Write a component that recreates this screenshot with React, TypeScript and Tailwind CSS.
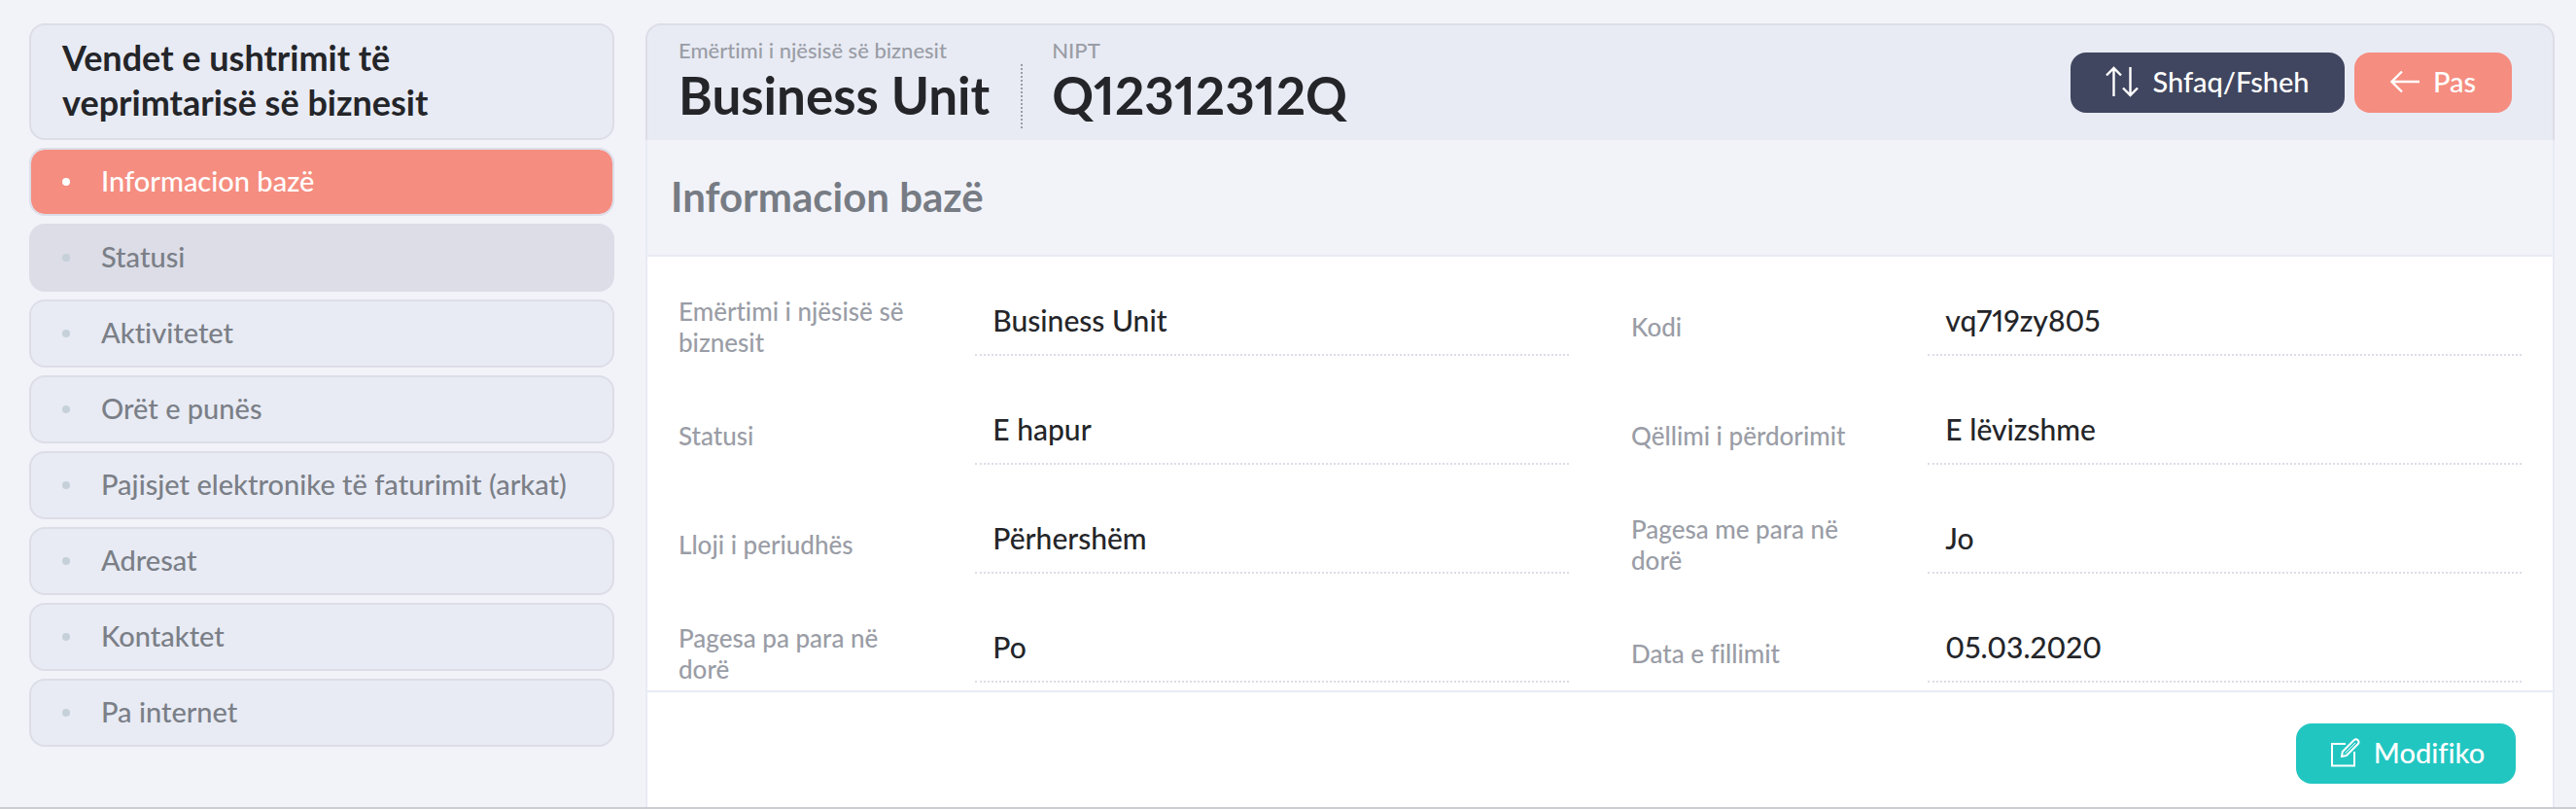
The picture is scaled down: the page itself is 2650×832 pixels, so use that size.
import React from 'react';
import clsx from 'clsx';

interface Field {
    id: string;
    label: string;
    value: string;
}

const menuItems = [
    'Informacion bazë',
    'Statusi',
    'Aktivitetet',
    'Orët e punës',
    'Pajisjet elektronike të faturimit (arkat)',
    'Adresat',
    'Kontaktet',
    'Pa internet',
];

const fields: Field[] = [
    { id: 'name', label: 'Emërtimi i njësisë së biznesit', value: 'Business Unit' },
    { id: 'code', label: 'Kodi', value: 'vq719zy805' },
    { id: 'status', label: 'Statusi', value: 'E hapur' },
    { id: 'purpose', label: 'Qëllimi i përdorimit', value: 'E lëvizshme' },
    { id: 'period', label: 'Lloji i periudhës', value: 'Përhershëm' },
    { id: 'cash', label: 'Pagesa me para në dorë', value: 'Jo' },
    { id: 'noncash', label: 'Pagesa pa para në dorë', value: 'Po' },
    { id: 'start', label: 'Data e fillimit', value: '05.03.2020' },
];

const SortIcon = () => (
    <svg width="34" height="32" viewBox="0 0 34 32" fill="none" stroke="currentColor" strokeWidth="2.4" aria-hidden="true">
        <path d="M8.5 31V2M1 9.5L8.5 2L16 9.5" />
        <path d="M25.5 1V30M18 22.5L25.5 30L33 22.5" />
    </svg>
);

const BackIcon = () => (
    <svg width="30" height="24" viewBox="0 0 30 24" fill="none" stroke="currentColor" strokeWidth="2.4" aria-hidden="true">
        <path d="M30 12H2M12 1.5L1.5 12L12 22.5" />
    </svg>
);

const EditIcon = () => (
    <svg width="30" height="30" viewBox="0 0 30 30" fill="none" stroke="currentColor" strokeWidth="2" aria-hidden="true">
        <path d="M15 6H1V28.5H24V14" />
        <path d="M11 19L11.8 14L23.8 2Q25.8 .4 27.6 2.2Q29.4 4.2 27.8 6L15.8 18L11 19Z" />
        <path d="M14.5 15.5L25 5" strokeWidth="1" />
    </svg>
);

const Sidebar: React.FC = () => (
    <aside className="w-[602px] shrink-0">
        <h2 className="rounded-2xl border-2 border-[#dcdde7] bg-[#e8ebf4] pt-[10px] pr-16 pb-[14px] pl-8 text-[36px] leading-[46px] font-bold text-[#242529]">
            Vendet e ushtrimit të veprimtarisë së biznesit
        </h2>
        <nav className="mt-2 flex flex-col gap-2">
            {menuItems.map((item, i) => (
                <a
                    key={item}
                    href="#"
                    className={clsx(
                        'flex h-[70px] items-center gap-8 rounded-2xl border-2 border-[#dcdde7] px-8 text-[29px] font-medium whitespace-nowrap',
                        i === 0 && 'bg-[#f58d80] bg-clip-padding text-white',
                        i === 1 && 'bg-[#dcdde7] text-[#7b7f87]',
                        i > 1 && 'bg-[#e8ebf4] text-[#7b7f87]'
                    )}
                >
                    <span className={clsx('size-2 shrink-0 rounded-full', i === 0 ? 'bg-white' : 'bg-[#c6d0d8]')} />
                    <span className="pb-[2px]">{item}</span>
                </a>
            ))}
        </nav>
    </aside>
);

const App: React.FC = () => (
    <div className="flex h-screen gap-8 border-b-2 border-[#cccdd0] bg-[#f2f3f9] pt-6 pr-[22px] pl-[30px] font-[Lato,sans-serif] proportional-nums [font-variant-ligatures:none]">
        <Sidebar />
        <main className="flex min-w-0 flex-1 flex-col">
            <header className="flex h-[120px] shrink-0 items-start justify-between rounded-t-2xl border-2 border-b-0 border-[#dcdde7] bg-[#e8ebf4] pr-[42px] pl-8">
                <div className="flex pt-[10px]">
                    <div className="pr-8">
                        <p className="text-[22px] leading-8 font-medium text-[#9a9da6]">Emërtimi i njësisë së biznesit</p>
                        <p className="text-[53px] leading-[60px] font-bold text-[#242529]">Business Unit</p>
                    </div>
                    <div className="mt-[30px] h-[66px] border-l-2 border-dotted border-[#9a9da6]" />
                    <div className="pl-[30px]">
                        <p className="text-[22px] leading-8 font-medium text-[#9a9da6]">NIPT</p>
                        <p className="text-[53px] leading-[60px] font-bold text-[#242529]">Q12312312Q</p>
                    </div>
                </div>
                <div className="flex gap-[10px] pt-7">
                    <button type="button" className="flex h-[62px] w-[282px] items-center justify-center gap-[14px] rounded-2xl bg-[#40465f] pb-[2px] text-[29px] font-medium text-white">
                        <SortIcon />
                        Shfaq/Fsheh
                    </button>
                    <button type="button" className="flex h-[62px] w-[162px] items-center justify-center gap-[14px] rounded-2xl bg-[#f58d80] pb-[2px] text-[29px] font-medium text-white">
                        <BackIcon />
                        Pas
                    </button>
                </div>
            </header>
            <section className="flex min-h-0 flex-1 flex-col border-x-2 border-[#e8ebf4]">
                <h1 className="flex h-[120px] shrink-0 items-center border-b-2 border-[#e8ebf4] px-6 pb-[2px] text-[42px] font-bold text-[#777c84]">
                    Informacion bazë
                </h1>
                <form className="grid min-h-0 flex-1 auto-rows-[64px] grid-cols-2 gap-x-16 gap-y-12 overflow-hidden bg-white px-8 pt-[42px]">
                    {fields.map((field) => (
                        <div key={field.id} className="flex items-center">
                            <label htmlFor={field.id} className="w-1/3 pr-14 pb-1 text-[26px] leading-8 font-medium text-[#9a9da6]">
                                {field.label}
                            </label>
                            <input
                                id={field.id}
                                readOnly
                                defaultValue={field.value}
                                className="h-[56px] w-2/3 border-b-2 border-dotted border-[#dcdde7] px-[18px] pb-4 text-[30px] font-medium text-[#242529] outline-none"
                            />
                        </div>
                    ))}
                </form>
                <footer className="flex h-[120px] shrink-0 items-start justify-end border-t-2 border-[#e8ebf4] bg-white pt-8 pr-[38px]">
                    <button type="button" className="flex h-[62px] w-[226px] items-center justify-center gap-[14px] rounded-2xl bg-[#22c6c1] pb-[2px] pl-1 text-[29px] font-medium text-white">
                        <EditIcon />
                        Modifiko
                    </button>
                </footer>
            </section>
        </main>
    </div>
);

export default App;
